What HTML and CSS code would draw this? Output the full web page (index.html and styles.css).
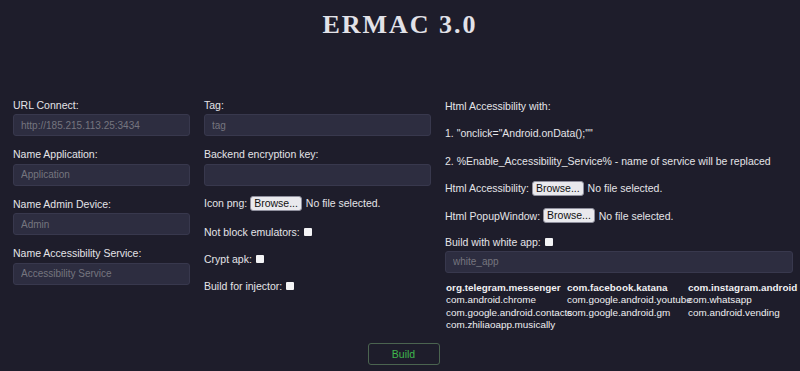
FILE: index.html
```html
<!DOCTYPE html>
<html>
<head>
<meta charset="utf-8">
<link rel="stylesheet" href="styles.css">
</head>
<body>
<h1 class="title">ERMAC 3.0</h1>
<div class="grid">
  <div class="col">
    <div class="field"><div class="label">URL Connect:</div><input class="inp" placeholder="http://185.215.113.25:3434"></div>
    <div class="field"><div class="label">Name Application:</div><input class="inp" placeholder="Application"></div>
    <div class="field"><div class="label">Name Admin Device:</div><input class="inp" placeholder="Admin"></div>
    <div class="field"><div class="label">Name Accessibility Service:</div><input class="inp" placeholder="Accessibility Service"></div>
  </div>
  <div class="col">
    <div class="field"><div class="label">Tag:</div><input class="inp" placeholder="tag"></div>
    <div class="field"><div class="label">Backend encryption key:</div><input class="inp"></div>
    <div class="row row-file">Icon png: <span class="browse">Browse...</span> No file selected.</div>
    <div class="row">Not block emulators: <span class="check"></span></div>
    <div class="row">Crypt apk: <span class="check"></span></div>
    <div class="row">Build for injector: <span class="check"></span></div>
  </div>
  <div class="col">
    <div class="row">Html Accessibility with:</div>
    <div class="row">1. "onclick="Android.onData();""</div>
    <div class="row">2. %Enable_Accessibility_Service% - name of service will be replaced</div>
    <div class="row">Html Accessibility: <span class="browse">Browse...</span> No file selected.</div>
    <div class="row">Html PopupWindow: <span class="browse">Browse...</span> No file selected.</div>
    <div class="row row-white">Build with white app: <span class="check"></span></div>
    <input class="inp inp-wide" placeholder="white_app">
    <div class="packages">
      <b>org.telegram.messenger</b><b>com.facebook.katana</b><b>com.instagram.android</b>
      <span>com.android.chrome</span><span>com.google.android.youtube</span><span>com.whatsapp</span>
      <span>com.google.android.contacts</span><span>com.google.android.gm</span><span>com.android.vending</span>
      <span>com.zhiliaoapp.musically</span>
    </div>
  </div>
</div>
<div class="actions"><button class="build">Build</button></div>
</body>
</html>
```
FILE: styles.css
```css
html, body {
  margin: 0;
  padding: 0;
  background: #1e1d2b;
  height: 100%;
}
body {
  font-family: "Liberation Sans", Arial, sans-serif;
  font-size: 10.5px;
  color: #e4e4e8;
}
.title {
  margin: 0;
  padding-top: 10px;
  height: 88px;
  box-sizing: border-box;
  text-align: center;
  font-family: "Liberation Serif", "Times New Roman", serif;
  font-weight: bold;
  font-size: 26px;
  letter-spacing: 2px;
  line-height: 30px;
  color: #e2e2e8;
}
.grid {
  display: grid;
  grid-template-columns: 177px 227px 348px;
  column-gap: 14px;
  padding-left: 13px;
  padding-top: 10.5px;
}
.col {
  display: flex;
  flex-direction: column;
}
.field {
  display: flex;
  flex-direction: column;
  margin-bottom: 12px;
}
.label {
  line-height: 12px;
  margin-bottom: 3.5px;
}
.inp {
  box-sizing: border-box;
  height: 22px;
  width: 100%;
  margin: 0;
  background: #2d2d40;
  border: 1px solid #38384d;
  border-radius: 3px;
  padding: 0 7px;
  font-family: "Liberation Sans", Arial, sans-serif;
  font-size: 10px;
  color: #cfcfd6;
  outline: none;
}
.inp::placeholder {
  color: #75757f;
}
.row {
  display: flex;
  align-items: center;
  height: 15px;
  margin-bottom: 12.4px;
  white-space: pre;
}
.row-file {
  margin-top: -2px;
  margin-bottom: 13.5px;
}
.col:nth-child(2) .row:not(.row-file) {
  margin-bottom: 12px;
}
.row-white {
  margin-bottom: 1.5px;
  height: 14px;
}
.browse {
  display: inline-block;
  box-sizing: border-box;
  height: 15px;
  line-height: 13px;
  padding: 0 3px;
  background: #e9e9ed;
  border: 1px solid #8f8f9d;
  border-radius: 3px;
  color: #111;
  font-size: 10.5px;
  margin-right: 1px;
}
.check {
  display: inline-block;
  width: 8px;
  height: 8px;
  background: #f4f4f6;
  border-radius: 1px;
  margin-left: 1px;
}
.inp-wide {
  margin-bottom: 9px;
}
.packages {
  display: grid;
  grid-template-columns: 121px 121px 106px;
  line-height: 12.3px;
  white-space: nowrap;
  color: #f0f0f2;
  font-size: 9.9px;
  padding-left: 1px;
}
.packages b {
  font-weight: bold;
}
.actions {
  display: flex;
  justify-content: center;
  padding-left: 7px;
  margin-top: 12px;
}
.build {
  width: 72px;
  height: 22px;
  background: transparent;
  border: 1px solid #4b6450;
  border-radius: 3px;
  color: #3fb84d;
  font-family: "Liberation Sans", Arial, sans-serif;
  font-size: 10.5px;
  padding: 0;
}
```
